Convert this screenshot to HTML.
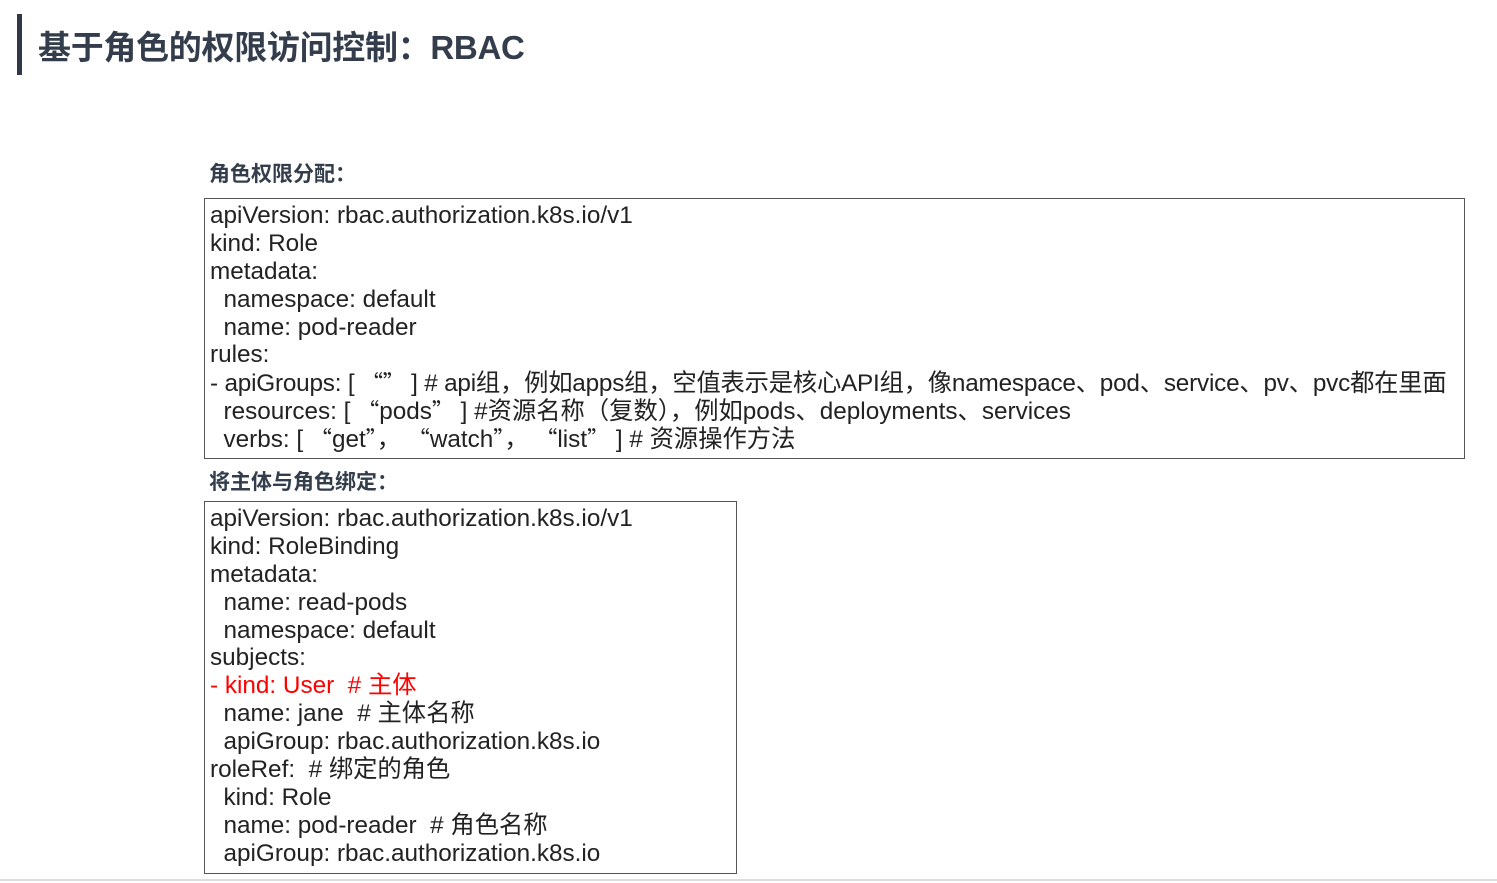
<!DOCTYPE html>
<html><head><meta charset="utf-8"><style>
body{margin:0;width:1497px;height:883px;background:#fff;position:relative;overflow:hidden;font-family:"Liberation Sans","Noto Sans CJK SC",sans-serif}
.bar{position:absolute;left:17px;top:14px;width:5px;height:61px;background:#2f3844}
.title{position:absolute;left:38px;top:21px;font-size:33px;font-weight:bold;color:#333d4b;white-space:nowrap;letter-spacing:-0.3px}
.h{position:absolute;left:209px;font-size:21px;font-weight:bold;color:#333d4b;white-space:nowrap}
.box{position:absolute;border:1px solid #555;box-sizing:border-box;padding:3px 0 0 5px;font-size:24.3px;color:#222;white-space:pre}
.box div{height:27.9px;line-height:27.9px}
.q{font-family:"Noto Sans CJK SC",sans-serif;font-size:22px}
.r{color:#f00}
.foot{position:absolute;left:0;top:879px;width:1497px;height:2px;background:#ddd}
</style></head><body>
<div class="bar"></div>
<div class="title">基于角色的权限访问控制：RBAC</div>
<div class="h" style="top:158px">角色权限分配：</div>
<div class="box" style="left:204px;top:198px;width:1261px;height:261px"><div>apiVersion: rbac.authorization.k8s.io/v1</div><div>kind: Role</div><div>metadata:</div><div>  namespace: default</div><div>  name: pod-reader</div><div>rules:</div><div style="letter-spacing:-0.2px">- apiGroups: [ <span class="q">“”</span> ] # api组，例如apps组，空值表示是核心API组，像namespace、pod、service、pv、pvc都在里面</div><div>  resources: [ <span class="q">“</span>pods<span class="q">”</span> ] #资源名称（复数），例如pods、deployments、services</div><div>  verbs: [ <span class="q">“</span>get<span class="q">”</span>， <span class="q">“</span>watch<span class="q">”</span>， <span class="q">“</span>list<span class="q">”</span> ] # 资源操作方法</div></div>
<div class="h" style="top:466px">将主体与角色绑定：</div>
<div class="box" style="left:204px;top:501px;width:533px;height:373px"><div>apiVersion: rbac.authorization.k8s.io/v1</div><div>kind: RoleBinding</div><div>metadata:</div><div>  name: read-pods</div><div>  namespace: default</div><div>subjects:</div><div class="r">- kind: User  # 主体</div><div>  name: jane  # 主体名称</div><div>  apiGroup: rbac.authorization.k8s.io</div><div>roleRef:  # 绑定的角色</div><div>  kind: Role</div><div>  name: pod-reader  # 角色名称</div><div>  apiGroup: rbac.authorization.k8s.io</div></div>
<div class="foot"></div>
</body></html>
